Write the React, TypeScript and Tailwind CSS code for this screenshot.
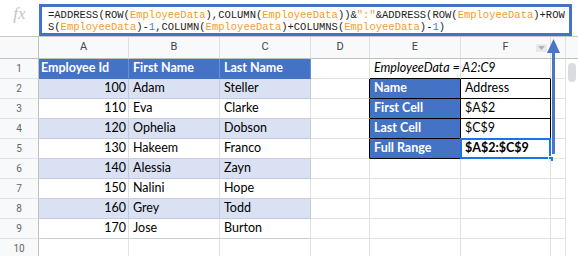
import React from 'react';

const firstNames = ['Adam', 'Eva', 'Ophelia', 'Hakeem', 'Alessia', 'Nalini', 'Grey', 'Jose'];
const lastNames = ['Steller', 'Clarke', 'Dobson', 'Franco', 'Zayn', 'Hope', 'Todd', 'Burton'];
const summary = [
  { label: 'Name', value: 'Address', bold: false },
  { label: 'First Cell', value: '$A$2', bold: false },
  { label: 'Last Cell', value: '$C$9', bold: false },
  { label: 'Full Range', value: '$A$2:$C$9', bold: true },
];

const Ref = ({ children }: { children: React.ReactNode }) => (
  <span className="text-[#f29b2f]">{children}</span>
);
const Num = ({ children }: { children: React.ReactNode }) => (
  <span className="text-[#3f7fd0]">{children}</span>
);

const FormulaBar = () => (
  <div className="flex h-[37px] border-b border-[#c7c7c7] bg-white">
    <div className="w-[39px] flex justify-center pt-[5px]">
      <span className="font-['Liberation_Serif',serif] italic text-[17px] leading-none text-[#c4c4c4]">fx</span>
    </div>
    <div className="mt-[4px] h-[32px] w-[533px] border-[3px] border-[#4472c4] pl-[6px] pt-[2px] font-['Liberation_Mono',monospace] text-[10.5px] leading-[12px] text-[#222] whitespace-pre">
      <div>
        =ADDRESS(ROW(<Ref>EmployeeData</Ref>),COLUMN(<Ref>EmployeeData</Ref>))&amp;<Ref>":"</Ref>&amp;ADDRESS(ROW(<Ref>EmployeeData</Ref>)+ROW
      </div>
      <div>
        S(<Ref>EmployeeData</Ref>)-<Num>1</Num>,COLUMN(<Ref>EmployeeData</Ref>)+COLUMNS(<Ref>EmployeeData</Ref>)-<Num>1</Num>)
      </div>
    </div>
  </div>
);

const cell = 'h-[20px] border-r border-b flex items-center whitespace-nowrap';

export default function App() {
  const headers = ['A', 'B', 'C', 'D', 'E', 'F'];
  const rows = Array.from({ length: 10 }, (_, i) => i + 1);

  return (
    <div className="relative w-[578px] h-[256px] overflow-hidden bg-white font-[Lato,sans-serif] text-[12.5px] text-black">
      <FormulaBar />

      <div className="grid grid-cols-[39px_90px_91px_91px_59px_91px_90px_15px_12px]">
        {/* column headers */}
        <div className="h-[22px] bg-[#f8f9fa] border-r border-b border-[#c0c0c0]" />
        {headers.map((h) => (
          <div
            key={h}
            className="relative h-[22px] bg-[#f8f9fa] border-r border-b border-r-[#e0e0e0] border-b-[#c0c0c0] flex items-center justify-center font-[Roboto,sans-serif] text-[11px] text-[#444]"
          >
            {h}
            {h === 'F' && (
              <div className="absolute left-[75px] top-[7px] w-[11px] h-[8px] bg-[#e8eaed] flex items-center justify-center">
                <svg width="7" height="4" viewBox="0 0 7 4">
                  <path d="M0 0h7L3.5 4z" fill="#b0b4b8" />
                </svg>
              </div>
            )}
          </div>
        ))}
        <div className="h-[22px] bg-[#f8f9fa] border-r border-b border-r-[#e0e0e0] border-b-[#c0c0c0]" />
        <div className="h-[22px] bg-[#f8f9fa] border-b border-[#c0c0c0]" />

        {rows.map((r) => {
          const header = r === 1;
          const band = r % 2 === 0 && r <= 8;
          const dataBg = header
            ? 'bg-[#4472c4] text-white font-bold border-r-[#6b8fd2] border-b-[#4472c4]'
            : band
              ? 'bg-[#d9e1f2] border-[#c3cadb]'
              : r <= 9
                ? 'bg-white border-r-[#e2e2e2] border-b-[#c8cde0]'
                : 'bg-white border-[#e2e2e2]';
          const inBox = r >= 2 && r <= 5;
          const s = inBox ? summary[r - 2] : null;

          return (
            <React.Fragment key={r}>
              <div className={`${cell} overflow-hidden justify-center bg-[#f8f9fa] border-r-[#c0c0c0] border-b-[#e2e2e2] font-[Roboto,sans-serif] text-[10px] text-[#666]`}>
                {r}
              </div>
              <div className={`${cell} overflow-hidden justify-end pr-[2px] ${dataBg}`}>
                {header ? <span className="w-full pl-[2px]">Employee Id</span> : r <= 9 ? 100 + (r - 2) * 10 : ''}
              </div>
              <div className={`${cell} overflow-hidden pl-[4px] ${dataBg}`}>
                {header ? 'First Name' : r <= 9 ? firstNames[r - 2] : ''}
              </div>
              <div className={`${cell} overflow-hidden pl-[4px] ${dataBg}`}>
                {header ? 'Last Name' : r <= 9 ? lastNames[r - 2] : ''}
              </div>
              <div className={`${cell} bg-white border-b-[#e2e2e2] ${inBox ? 'border-r-black' : 'border-r-[#e2e2e2]'}`} />
              <div
                className={`${cell} pl-[4px] ${
                  inBox
                    ? 'overflow-hidden bg-[#4472c4] text-white font-bold border-black'
                    : header
                      ? 'relative z-10 bg-white italic border-r-[#e2e2e2] border-b-black'
                      : 'bg-white border-[#e2e2e2]'
                }`}
              >
                {header ? 'EmployeeData = A2:C9' : s ? s.label : ''}
              </div>
              <div
                className={`${cell} relative pl-[4px] ${header ? '' : 'bg-white'} ${
                  inBox ? 'border-black' : header ? 'border-r-[#e2e2e2] border-b-black' : 'border-[#e2e2e2]'
                } ${s?.bold ? 'font-bold' : ''}`}
              >
                {s ? s.value : ''}
                {r === 5 && (
                  <>
                    <div className="absolute -left-[1px] -top-[1px] -right-[1px] -bottom-[1px] border-2 border-[#1a73e8]" />
                    <div className="absolute -right-[4px] -bottom-[4px] w-[6px] h-[6px] bg-[#1a73e8] border border-white" />
                  </>
                )}
              </div>
              <div className={`${cell} bg-white border-[#e2e2e2]`} />
              <div className="h-[20px] bg-white" />
            </React.Fragment>
          );
        })}
      </div>

      {/* scrollbar thumb */}
      <div className="absolute left-[568px] top-[63px] w-[8px] h-[19px] rounded-[4px] bg-[#dadce0]" />

      {/* arrow pointing up to the formula */}
      <svg className="absolute left-[545px] top-[38px]" width="17" height="118" viewBox="0 0 17 118">
        <path d="M8.5 12 V116" stroke="#4a76c8" strokeWidth="3" />
        <path d="M8.5 1 L2 15 L15 15 Z" fill="#4a76c8" />
      </svg>
    </div>
  );
}
